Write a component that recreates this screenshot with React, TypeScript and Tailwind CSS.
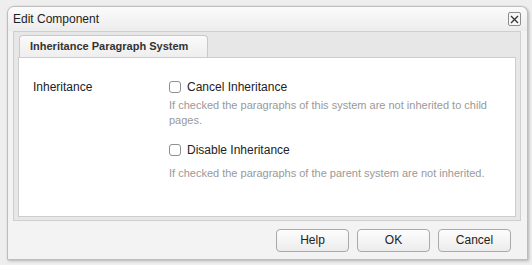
import React from "react";

function Checkbox() {
  return (
    <span className="inline-block w-[12px] h-[12px] rounded-[3px] border border-[#8f8f8f] bg-white shrink-0" />
  );
}

function Btn({ label }: { label: string }) {
  return (
    <button className="w-[73px] h-[23px] rounded-[4px] border border-[#a9a9a9] bg-gradient-to-b from-[#fdfdfd] to-[#ececec] text-[12px] text-[#222] leading-none">
      {label}
    </button>
  );
}

export default function App() {
  return (
    <div
      className="w-[532px] h-[265px] bg-[#eeeeee] pl-[7px] pt-[6px] overflow-hidden"
      style={{ fontFamily: '"Liberation Sans", Arial, sans-serif' }}
    >
      <div className="w-[521px] h-[254px] border border-[#bdbdbd] rounded-t-[7px] bg-[#f3f3f3] shadow-[1px_1px_3px_rgba(0,0,0,0.25)] flex flex-col">
        {/* title bar */}
        <div className="h-[24px] flex items-center justify-between pl-[5px] pr-[6px] rounded-t-[7px] bg-gradient-to-b from-[#fbfbfb] to-[#ececec]">
          <span className="text-[12px] text-[#222]">Edit Component</span>
          <span className="w-[13px] h-[14px] rounded-[2px] border border-[#8c8c8c] bg-[#f7f7f7] flex items-center justify-center">
            <svg width="9" height="9" viewBox="0 0 9 9">
              <path d="M1 1 L8 8 M8 1 L1 8" stroke="#333" strokeWidth="1.3" />
            </svg>
          </span>
        </div>
        {/* tab panel */}
        <div className="ml-[5px] w-[508px] h-[190px] border border-[#cfcfcf] bg-[#e7e7e7] flex flex-col px-[4px] pb-[3px]">
          <div className="h-[25px] flex items-end pl-[1px]">
            <div className="w-[189px] h-[22px] border border-b-0 border-[#c9c9c9] rounded-t-[4px] bg-gradient-to-b from-[#fafafa] to-[#eeeeee] flex items-center pl-[10px] text-[11px] font-bold text-[#333]">
              Inheritance Paragraph System
            </div>
          </div>
          <div className="flex-1 border border-[#cdcdcd] bg-white flex pt-[22px] pl-[14px]">
            <div className="w-[136px] text-[12px] text-[#222] leading-none pt-[1px]">Inheritance</div>
            <div className="flex flex-col">
              <div className="flex items-center gap-[6px] h-[14px]">
                <Checkbox />
                <span className="text-[12px] text-[#222]">Cancel Inheritance</span>
              </div>
              <div className="mt-[4px] text-[11px] leading-[15px] text-[#999] w-[330px]">
                If checked the paragraphs of this system are not inherited to child pages.
              </div>
              <div className="mt-[15px] flex items-center gap-[6px] h-[14px]">
                <Checkbox />
                <span className="text-[12px] text-[#222]">Disable Inheritance</span>
              </div>
              <div className="mt-[9px] text-[11px] leading-[15px] text-[#999]">
                If checked the paragraphs of the parent system are not inherited.
              </div>
            </div>
          </div>
        </div>
        {/* footer */}
        <div className="flex-1 flex items-center justify-end gap-[8px] pr-[16px]">
          <Btn label="Help" />
          <Btn label="OK" />
          <Btn label="Cancel" />
        </div>
      </div>
    </div>
  );
}
